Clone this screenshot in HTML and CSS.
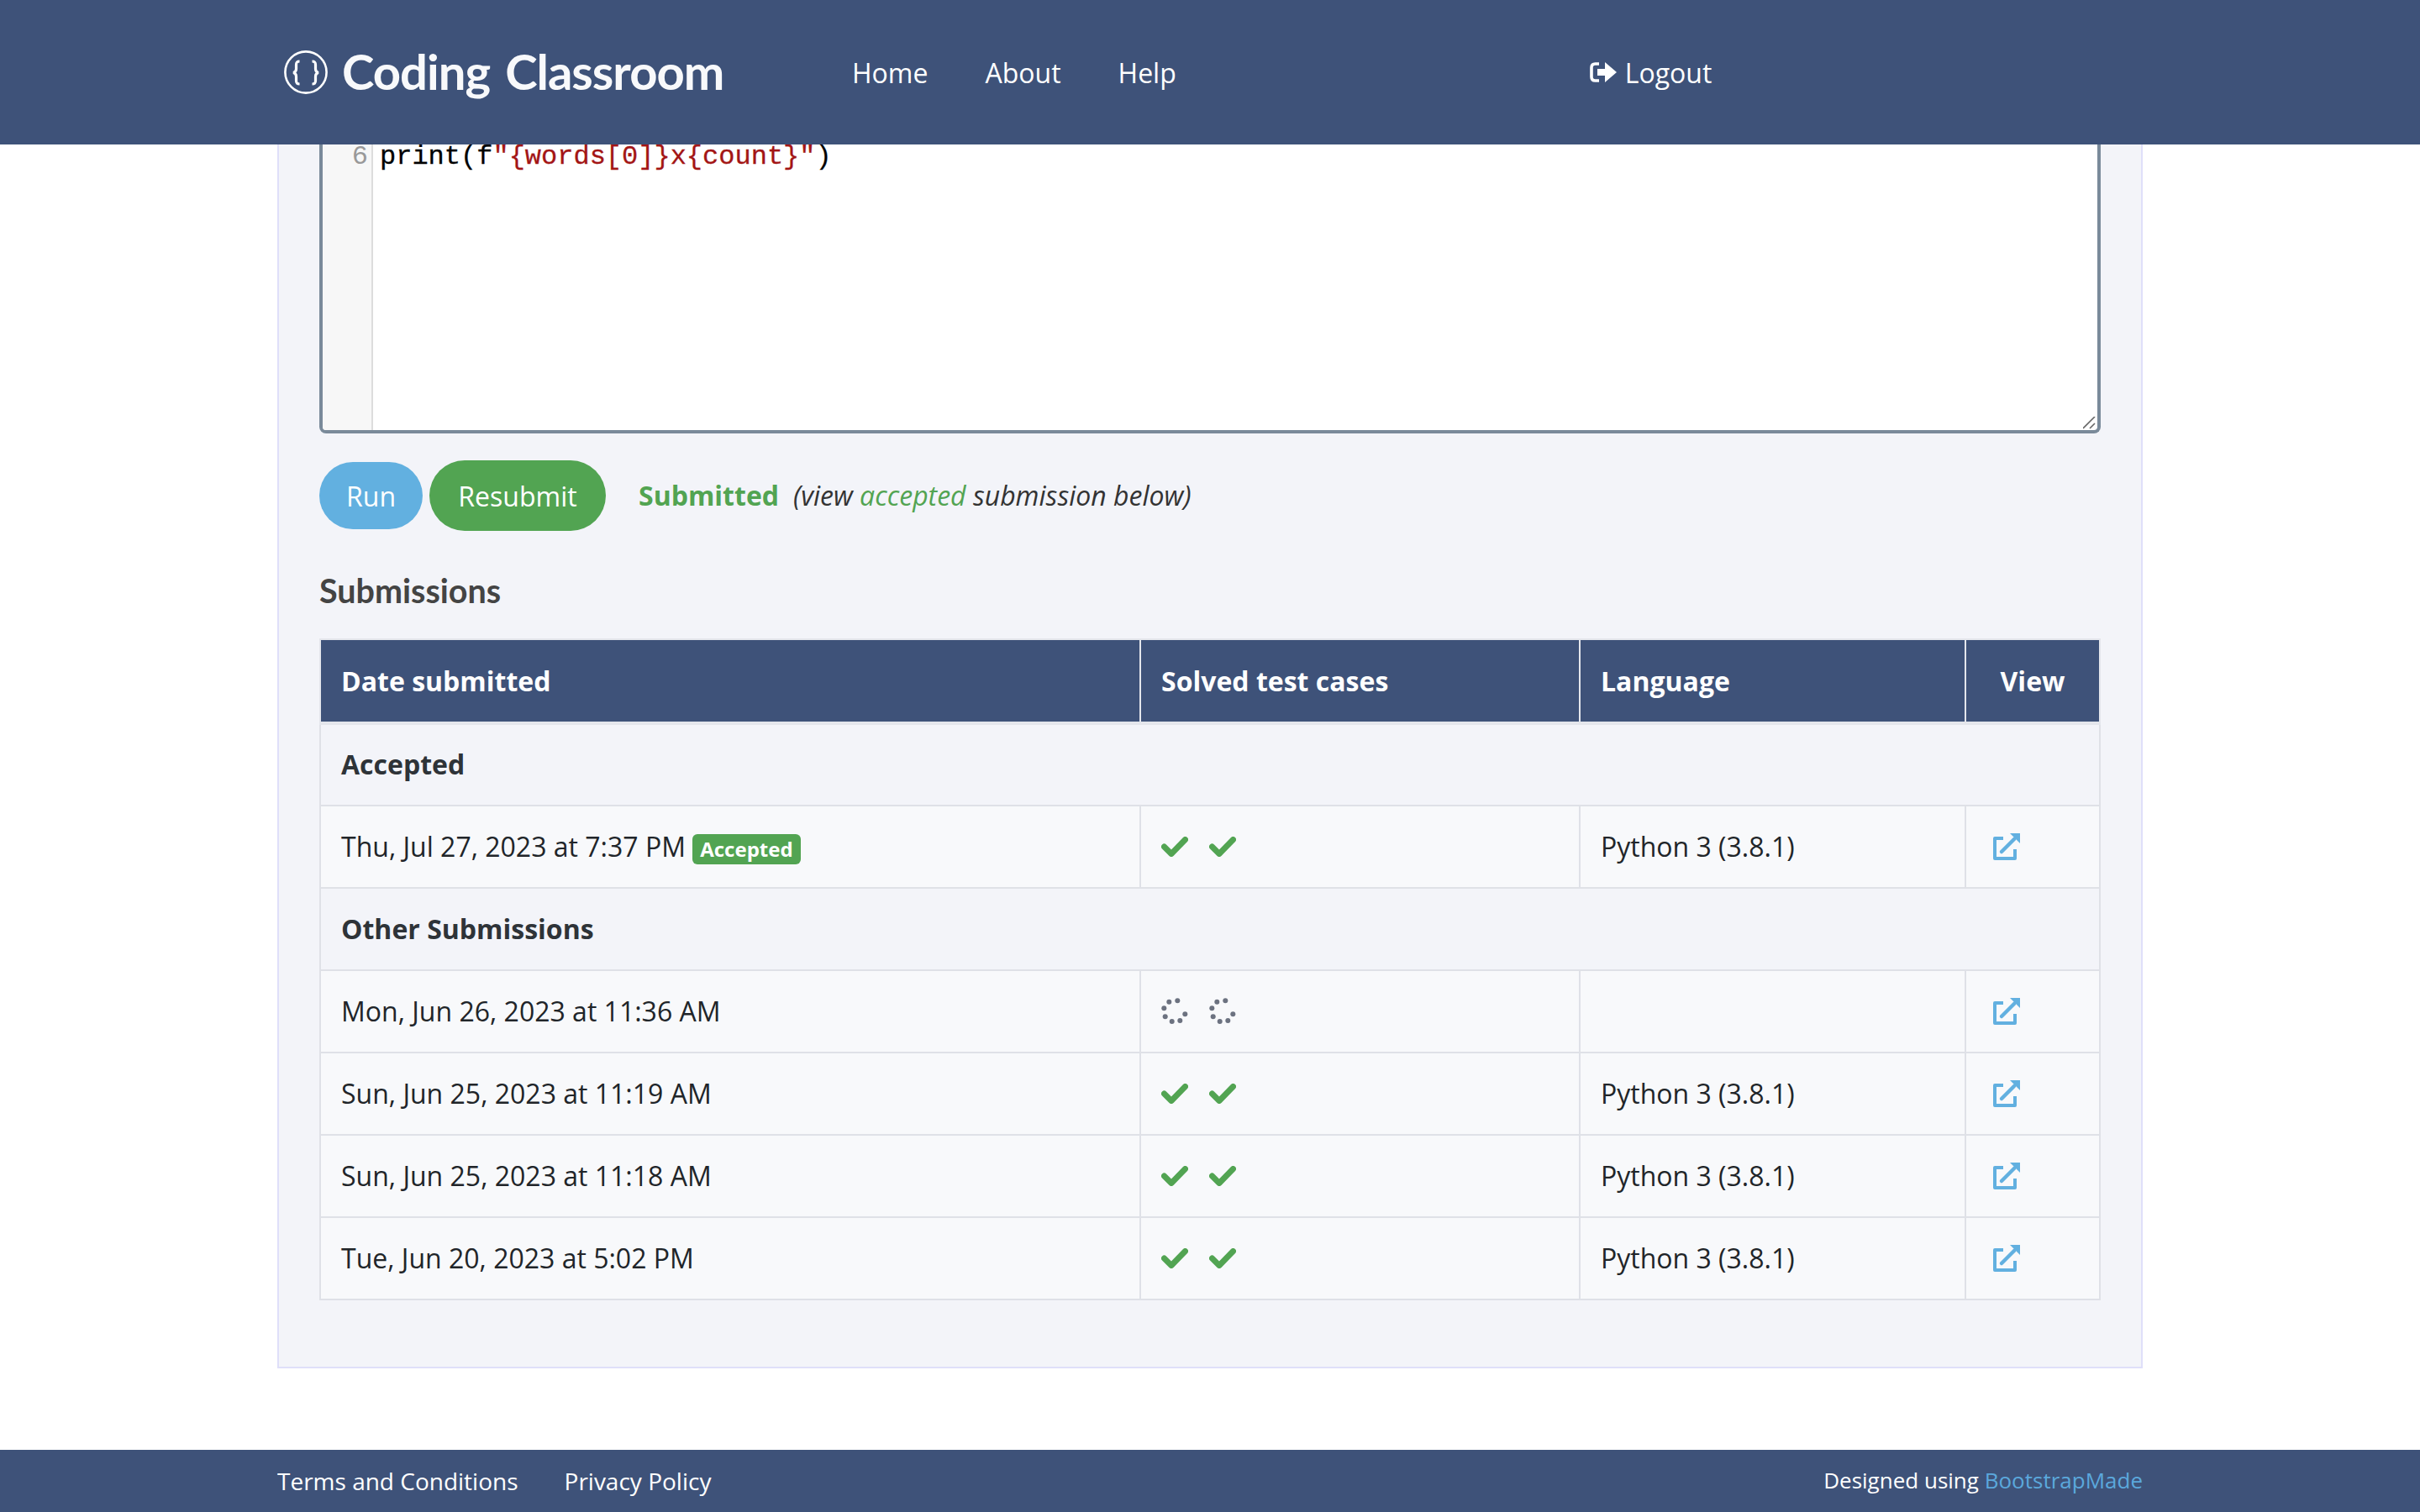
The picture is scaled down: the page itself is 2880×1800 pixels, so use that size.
FILE: index.html
```html
<!DOCTYPE html>
<html lang="en">
<head>
  <meta charset="UTF-8">
  <meta name="viewport" content="width=device-width, initial-scale=1.0">
  <title>Coding Classroom</title>
  <link rel="stylesheet" href="styles.css">
</head>
<body>

  <header class="site-header">
    <div class="container header-inner">
      <a class="brand" href="#">
        <svg class="brand-icon" viewBox="0 0 52 52" width="52" height="52" fill="none" stroke="#fff">
          <circle cx="26" cy="26" r="24.6" stroke-width="2.6"/>
          <path stroke-width="3.2" d="M18.500 13c-3 0-4 1-4 4v5c0 3-1 4-3.500 4.500 2.500.5 3.500 1.500 3.500 4.500v5c0 3 1 4 4 4"/>
          <path stroke-width="3.2" d="M33.500 13c3 0 4 1 4 4v5c0 3 1 4 3.500 4.500-2.500.5-3.500 1.500-3.500 4.500v5c0 3-1 4-4 4"/>
        </svg>
        <span class="brand-name">Coding Classroom</span>
      </a>
      <nav class="main-nav">
        <a href="#">Home</a>
        <a href="#">About</a>
        <a href="#">Help</a>
      </nav>
      <a class="logout" href="#">
        <svg viewBox="0 0 32 24" width="32" height="24" fill="#fff">
          <path d="M11 2H6.500Q2 2 2 6.500v11Q2 22 6.500 22H11" fill="none" stroke="#fff" stroke-width="3.600"/>
          <path d="M9 8h9V0l14 12-14 12v-8H9z"/>
        </svg>
        Logout
      </a>
    </div>
  </header>

  <main class="container panel">
    <div class="editor">
      <div class="gutter">6</div>
      <pre class="code">print(f<span class="str">"{words[0]}x{count}"</span>)</pre>
      <svg class="grip" viewBox="0 0 15 15" width="15" height="15"><path d="M0 14 14 0M8 14l6-6"/></svg>
    </div>

    <div class="actions">
      <button class="btn btn-run">Run</button>
      <button class="btn btn-submit">Resubmit</button>
      <span class="status-ok">Submitted</span>
      <em class="status-note">(view <a href="#">accepted</a> submission below)</em>
    </div>

    <h2 class="section-title">Submissions</h2>

    <table class="submissions">
      <colgroup>
        <col class="col-date">
        <col class="col-cases">
        <col class="col-lang">
        <col class="col-view">
      </colgroup>
      <thead>
        <tr>
          <th>Date submitted</th>
          <th>Solved test cases</th>
          <th>Language</th>
          <th class="center">View</th>
        </tr>
      </thead>
      <tbody>
        <tr class="group"><td colspan="4">Accepted</td></tr>
        <tr>
          <td>Thu, Jul 27, 2023 at 7:37 PM <span class="badge">Accepted</span></td>
          <td><div class="cases">
            <svg class="check" viewBox="0 0 32 24"><polyline points="3.500,12 12,20.500 28.500,3.500"/></svg>
            <svg class="check" viewBox="0 0 32 24"><polyline points="3.500,12 12,20.500 28.500,3.500"/></svg>
          </div></td>
          <td>Python 3 (3.8.1)</td>
          <td><a class="open-link" href="#"><svg viewBox="0 0 32 32"><path class="box" d="M12 6H2v24h24V19"/><path class="shaft" d="M10 22 25 7"/><path class="head" d="M20 0h12v12z"/></svg></a></td>
        </tr>
        <tr class="group"><td colspan="4">Other Submissions</td></tr>
        <tr>
          <td>Mon, Jun 26, 2023 at 11:36 AM</td>
          <td><div class="cases">
            <svg class="spinner" viewBox="0 0 32 32"><circle cx="3.300" cy="12.300" r="3"/><circle cx="4.700" cy="22.300" r="3"/><circle cx="9.300" cy="4.700" r="3"/><circle cx="12.700" cy="28" r="3"/><circle cx="19.300" cy="3.300" r="3"/><circle cx="22.300" cy="27" r="3"/><circle cx="28.300" cy="19.300" r="3"/></svg>
            <svg class="spinner" viewBox="0 0 32 32"><circle cx="3.300" cy="12.300" r="3"/><circle cx="4.700" cy="22.300" r="3"/><circle cx="9.300" cy="4.700" r="3"/><circle cx="12.700" cy="28" r="3"/><circle cx="19.300" cy="3.300" r="3"/><circle cx="22.300" cy="27" r="3"/><circle cx="28.300" cy="19.300" r="3"/></svg>
          </div></td>
          <td></td>
          <td><a class="open-link" href="#"><svg viewBox="0 0 32 32"><path class="box" d="M12 6H2v24h24V19"/><path class="shaft" d="M10 22 25 7"/><path class="head" d="M20 0h12v12z"/></svg></a></td>
        </tr>
        <tr>
          <td>Sun, Jun 25, 2023 at 11:19 AM</td>
          <td><div class="cases">
            <svg class="check" viewBox="0 0 32 24"><polyline points="3.500,12 12,20.500 28.500,3.500"/></svg>
            <svg class="check" viewBox="0 0 32 24"><polyline points="3.500,12 12,20.500 28.500,3.500"/></svg>
          </div></td>
          <td>Python 3 (3.8.1)</td>
          <td><a class="open-link" href="#"><svg viewBox="0 0 32 32"><path class="box" d="M12 6H2v24h24V19"/><path class="shaft" d="M10 22 25 7"/><path class="head" d="M20 0h12v12z"/></svg></a></td>
        </tr>
        <tr>
          <td>Sun, Jun 25, 2023 at 11:18 AM</td>
          <td><div class="cases">
            <svg class="check" viewBox="0 0 32 24"><polyline points="3.500,12 12,20.500 28.500,3.500"/></svg>
            <svg class="check" viewBox="0 0 32 24"><polyline points="3.500,12 12,20.500 28.500,3.500"/></svg>
          </div></td>
          <td>Python 3 (3.8.1)</td>
          <td><a class="open-link" href="#"><svg viewBox="0 0 32 32"><path class="box" d="M12 6H2v24h24V19"/><path class="shaft" d="M10 22 25 7"/><path class="head" d="M20 0h12v12z"/></svg></a></td>
        </tr>
        <tr>
          <td>Tue, Jun 20, 2023 at 5:02 PM</td>
          <td><div class="cases">
            <svg class="check" viewBox="0 0 32 24"><polyline points="3.500,12 12,20.500 28.500,3.500"/></svg>
            <svg class="check" viewBox="0 0 32 24"><polyline points="3.500,12 12,20.500 28.500,3.500"/></svg>
          </div></td>
          <td>Python 3 (3.8.1)</td>
          <td><a class="open-link" href="#"><svg viewBox="0 0 32 32"><path class="box" d="M12 6H2v24h24V19"/><path class="shaft" d="M10 22 25 7"/><path class="head" d="M20 0h12v12z"/></svg></a></td>
        </tr>
      </tbody>
    </table>
  </main>

  <footer class="site-footer">
    <div class="container footer-inner">
      <div class="footer-links">
        <a href="#">Terms and Conditions</a>
        <a href="#">Privacy Policy</a>
      </div>
      <div class="credits">Designed using <a href="#">BootstrapMade</a></div>
    </div>
  </footer>

</body>
</html>
```

FILE: styles.css
```css
* {
  margin: 0;
  padding: 0;
  box-sizing: border-box;
}

body {
  font-family: "Open Sans", sans-serif;
  font-size: 32px;
  color: #212529;
  background-color: #fff;
  height: 1800px;
  overflow: hidden;
}

a {
  text-decoration: none;
  color: inherit;
}

.container {
  width: 2220px;
  margin: 0 auto;
}

/* header */
.site-header {
  position: relative;
  z-index: 2;
  background-color: #3e5279;
  height: 172px;
  color: #fff;
}

.header-inner {
  display: flex;
  align-items: center;
  height: 100%;
}

.brand {
  display: flex;
  align-items: center;
  margin-left: 8px;
  width: 676px;
}

.brand-name {
  font-family: Lato, sans-serif;
  font-size: 58px;
  font-weight: 700;
  letter-spacing: -1px;
  word-spacing: 5px;
  margin-left: 17px;
  padding-bottom: 3px;
  color: #f8f9fb;
}

.main-nav {
  display: flex;
  gap: 68px;
}

.logout {
  display: flex;
  align-items: center;
  gap: 10px;
  margin-left: 492px;
}

/* main panel */
.panel {
  background-color: #f3f4f9;
  border: 2px solid #dfdff9;
  border-top: none;
  padding: 0 48px;
  height: 1457px;
}

.editor {
  position: relative;
  display: flex;
  height: 344px;
  background-color: #fff;
  border: 4px solid #7a8a9a;
  border-top: none;
  border-radius: 0 0 8px 8px;
}

.gutter {
  width: 60px;
  background-color: #f7f7f7;
  border-right: 2px solid #ddd;
  border-bottom-left-radius: 4px;
  text-align: right;
  padding-right: 4px;
  font-family: "Liberation Mono", monospace;
  font-size: 32px;
  line-height: 30px;
  color: #999;
}

.code {
  font-family: "Liberation Mono", monospace;
  font-size: 32px;
  line-height: 30px;
  padding-left: 8px;
  color: #000;
  -webkit-text-stroke: 0.3px;
}

.str {
  color: #a31515;
}

.grip {
  position: absolute;
  right: 2px;
  bottom: 1px;
  fill: none;
  stroke: #666;
  stroke-width: 1.6;
}

.actions {
  display: flex;
  align-items: center;
  margin-top: 32px;
}

.btn {
  border: none;
  border-radius: 42px;
  font-family: inherit;
  font-size: 32px;
  color: #fff;
  cursor: pointer;
}

.btn-run {
  background-color: #62b0e0;
  height: 80px;
  width: 123px;
}

.btn-submit {
  background-color: #52a452;
  height: 84px;
  width: 210px;
  margin-left: 8px;
}

.status-ok {
  color: #52a452;
  font-weight: 700;
  margin-left: 39px;
  padding-bottom: 2px;
}

.status-note {
  color: #333;
  margin-left: 17px;
  padding-bottom: 2px;
}

.status-note a {
  color: #52a452;
}

.section-title {
  font-family: Lato, sans-serif;
  font-size: 39.500px;
  font-weight: 700;
  color: #444;
  line-height: 48px;
  margin-top: 47px;
  margin-bottom: 33px;
}

/* submissions table */
.submissions {
  width: 2120px;
  border-collapse: collapse;
  table-layout: fixed;
}

.col-date { width: 976px; }
.col-cases { width: 523px; }
.col-lang { width: 459px; }
.col-view { width: 160px; }

.submissions th {
  height: 100px;
  background-color: #3e5279;
  color: #fff;
  text-align: left;
  font-weight: 700;
  padding: 0 24px;
  border: 2px solid #e4e6ec;
  border-bottom-width: 4px;
}

.submissions th.center {
  text-align: center;
}

.submissions td {
  height: 98px;
  padding: 0 24px 2px;
  background-color: #f8f9fb;
  border: 2px solid #dfe1e7;
}

.submissions .group td {
  background-color: #f3f4f9;
  font-weight: 700;
  color: #2e3338;
}

.badge {
  display: inline-block;
  background-color: #52a452;
  color: #fff;
  font-size: 24px;
  font-weight: 700;
  line-height: 36px;
  padding: 0 9px;
  border-radius: 6px;
  vertical-align: 0;
}

.cases {
  display: flex;
  gap: 25px;
  padding-top: 2px;
}

.check {
  width: 32px;
  height: 24px;
  fill: none;
  stroke: #52a452;
  stroke-width: 7;
  stroke-linejoin: round;
  stroke-linecap: round;
}

.spinner {
  width: 32px;
  height: 32px;
  fill: #6c7280;
}

.open-link {
  display: block;
  width: 32px;
  height: 32px;
  margin: 2px 0 0 8px;
}

.open-link svg {
  display: block;
  width: 32px;
  height: 32px;
}

.box {
  fill: none;
  stroke: #62b0e0;
  stroke-width: 4;
  stroke-linejoin: round;
}

.shaft {
  fill: none;
  stroke: #62b0e0;
  stroke-width: 4.500;
  stroke-linecap: round;
}

.head {
  fill: #62b0e0;
}

/* footer */
.site-footer {
  background-color: #3e5279;
  color: #fff;
  height: 74px;
  margin-top: 97px;
}

.footer-inner {
  display: flex;
  justify-content: space-between;
  align-items: center;
  height: 100%;
}

.footer-links {
  display: flex;
  gap: 55px;
  font-size: 28px;
}

.credits {
  font-size: 26px;
  padding-bottom: 2px;
}

.credits a {
  color: #5ba8dc;
}
```
